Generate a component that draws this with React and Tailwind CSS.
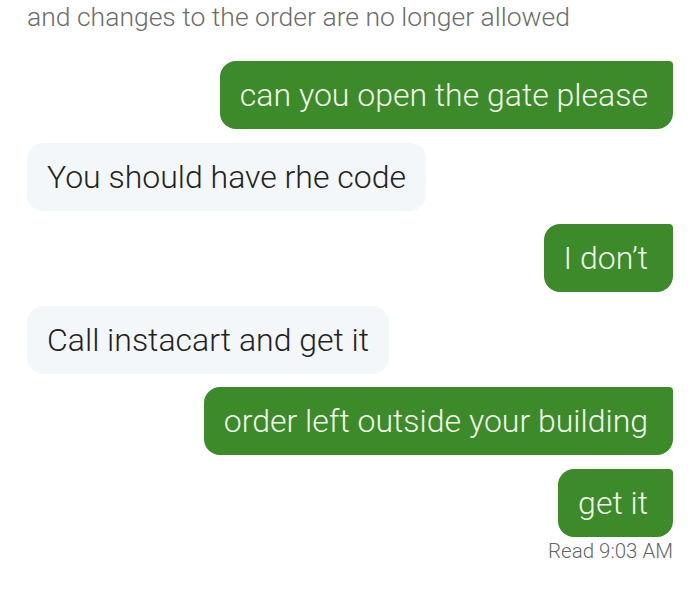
const messages = [
  { from: 'me', text: 'can you open the gate please' },
  { from: 'them', text: 'You should have rhe code' },
  { from: 'me', text: 'I don’t' },
  { from: 'them', text: 'Call instacart and get it' },
  { from: 'me', text: 'order left outside your building' },
  { from: 'me', text: 'get it' },
]

function Bubble({ from, text }) {
  if (from === 'me') {
    return (
      <div className="flex justify-end">
        <div className="h-[68px] flex items-center pl-[20px] pr-[25px] rounded-[16px] rounded-tr-[4px] bg-[#3c8a2a] text-[#f2f9ec] text-[32px] font-light">
          {text}
        </div>
      </div>
    )
  }
  return (
    <div className="flex justify-start">
      <div className="h-[68px] flex items-center px-[20px] rounded-[16px] bg-[#f4f7fa] text-[#222] text-[32px] font-light">
        {text}
      </div>
    </div>
  )
}

export default function App() {
  return (
    <div className="w-[700px] h-[598px] bg-white px-[27px] font-['Roboto',sans-serif] overflow-hidden">
      <p className="text-[26.5px] leading-[36px] text-[#6d6d6d] font-light -mt-[1px]">
        and changes to the order are no longer allowed
      </p>
      <div className="mt-[26px] flex flex-col gap-[13.5px]">
        {messages.map((m, i) => (
          <Bubble key={i} from={m.from} text={m.text} />
        ))}
      </div>
      <p className="text-right text-[20.5px] leading-[26px] text-[#666] mt-[1px] font-light">Read 9:03 AM</p>
    </div>
  )
}
